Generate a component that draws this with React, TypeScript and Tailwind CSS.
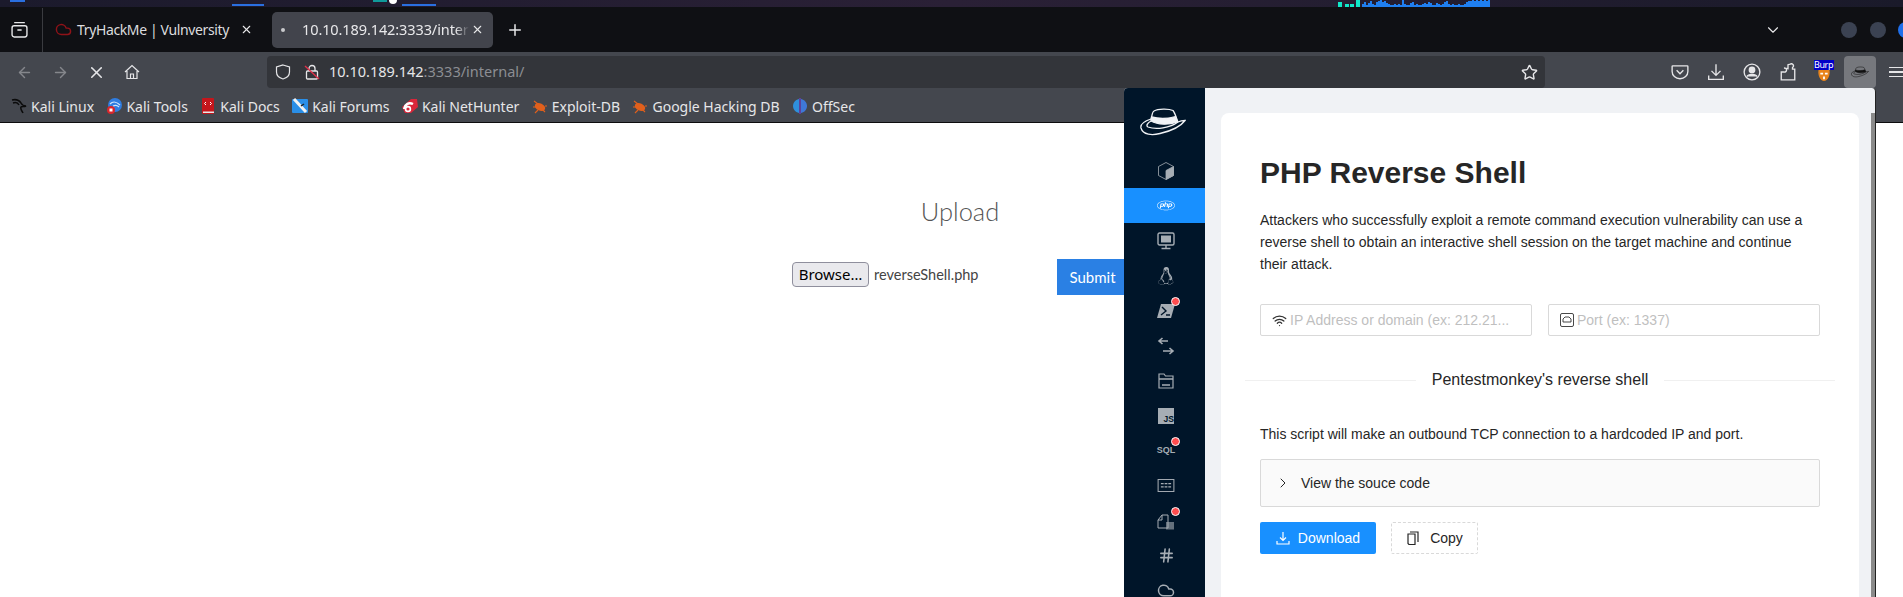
import { ArrowLeft, ArrowRight, X, Plus, ChevronDown, ChevronRight, Star, Wifi, Hash, Cloud } from 'lucide-react';
import { FaLinux, FaPhp } from 'react-icons/fa';

// network graph in the wallpaper strip, one value per 2px column
const graph = [3, 5, 2, 4, 6, 3, 2, 5, 6, 7, 5, 6, 4, 3, 2, 2, 3, 2, 3, 2, 7, 3, 2, 2, 4, 5, 2, 3, 2, 2, 3, 4, 3, 5, 4, 2, 2, 4, 3, 2, 3, 5, 6, 3, 2, 3, 2, 2, 3, 2, 2, 3, 5, 6, 6, 7, 6, 7, 6, 7, 6, 7, 6, 7];

function KaliIcon() {
  return (
    <svg viewBox="0 0 16 16" className="h-4 w-4" fill="none" stroke="#0b0b0b" strokeWidth="1.5">
      <path d="M1 2c4-1 7 0 9 3 1 2 3 3 5 3-2 1-4 0-5 1-1 2 1 4 2 6M2 5c3-1 5 0 6 2" />
    </svg>
  );
}

function ToolsIcon() {
  return (
    <svg viewBox="0 0 16 16" className="h-4 w-4">
      <circle cx="9" cy="7" r="7" fill="#2f7de1" />
      <path d="M4 6c3-3 7-2 10 1M7 8c2-1 4-1 6 1" stroke="#cfe4fb" strokeWidth="1.2" fill="none" />
      <circle cx="5" cy="12" r="4" fill="#d8262c" />
      <rect x="3.5" y="10.5" width="3" height="3" fill="#fff" />
    </svg>
  );
}

function DocsIcon() {
  return (
    <svg viewBox="0 0 16 16" className="h-4 w-4">
      <rect x="2" y="0" width="12" height="16" rx="1" fill="#c4161c" />
      <rect x="3" y="13.5" width="11" height="1.5" fill="#e8e8e8" />
      <path d="M6 4 4.5 5.5 6 7M10 4l1.5 1.5L10 7" stroke="#fff" strokeWidth="1" fill="none" />
    </svg>
  );
}

function ForumsIcon() {
  return (
    <svg viewBox="0 0 16 16" className="h-4 w-4">
      <rect x="0" y="1" width="16" height="14" rx="1" fill="#2a8fe8" />
      <path d="M2 1 14 14" stroke="#f2f2f2" strokeWidth="3" />
      <path d="M9 8l3-2" stroke="#222" strokeWidth="1.5" />
    </svg>
  );
}

function NetHunterIcon() {
  return (
    <svg viewBox="0 0 16 16" className="h-4 w-4">
      <path d="M0 9 9 1h6l1 8-7 6H3Z" fill="#d9263a" />
      <path d="M2 11c1-5 5-7 9-5" stroke="#fff" strokeWidth="2.4" fill="none" />
      <circle cx="6" cy="11" r="2.4" fill="none" stroke="#fff" strokeWidth="1.6" />
    </svg>
  );
}

function BugIcon() {
  return (
    <svg viewBox="0 0 16 16" className="h-4 w-4">
      <ellipse cx="8" cy="9" rx="5.5" ry="3.6" fill="#e2601c" transform="rotate(25 8 9)" />
      <path d="M2 3l4 3M1 9h3M3 15l3-3M13 14l-2-2M15 8h-2" stroke="#e2601c" strokeWidth="1.1" />
    </svg>
  );
}

function OffSecIcon() {
  return (
    <svg viewBox="0 0 16 16" className="h-4 w-4">
      <path d="M7 1C3 2 1 5 1 8s2 6 6 7Z" fill="#2f8fdc" />
      <path d="M9 1c4 1 6 4 6 7s-2 6-6 7Z" fill="#3f78d8" />
      <rect x="7.4" y="0" width="1.2" height="16" fill="#6a3fd0" />
    </svg>
  );
}

const bookmarks = [
  { label: 'Kali Linux', icon: <KaliIcon /> },
  { label: 'Kali Tools', icon: <ToolsIcon /> },
  { label: 'Kali Docs', icon: <DocsIcon /> },
  { label: 'Kali Forums', icon: <ForumsIcon /> },
  { label: 'Kali NetHunter', icon: <NetHunterIcon /> },
  { label: 'Exploit-DB', icon: <BugIcon /> },
  { label: 'Google Hacking DB', icon: <BugIcon /> },
  { label: 'OffSec', icon: <OffSecIcon /> },
];

function Hat({ className }: { className?: string }) {
  return (
    <svg viewBox="0 0 46 28" className={className} fill="none" stroke="currentColor" strokeWidth="1.3">
      <path d="M11 12 C12 8 12 4 14 3 C18 0.5 29 0.5 33 2.5 C35 5 36 9 38 14" />
      <path d="M11.5 9 C19 11 29 10.5 35.5 8.5 L37.5 14 C29 17 18 17 11 13 Z" fill="currentColor" />
      <path d="M11 11 C5 13 0 16 1 20 C3 27 12 27.5 20 25.5 C31 23 41 18 45 12.5 C42 12.5 40 13 38 14 C30 20 16 22 8 19 C6 18 7 15 11 13" />
    </svg>
  );
}

function NavSlot({ children }: { children: React.ReactNode }) {
  return <div className="flex h-8 w-9 shrink-0 items-center justify-center">{children}</div>;
}

function SideItem({ children, active, badge }: { children: React.ReactNode; active?: boolean; badge?: boolean }) {
  return (
    <div className={`flex h-[35px] shrink-0 items-center justify-center pl-[3px] ${active ? 'bg-[#1890ff] text-white' : 'text-[#a6adb4]'}`}>
      <div className="relative flex h-[18px] w-[18px] items-center justify-center">
        {children}
        {badge && <span className="absolute -right-[5px] -top-[5px] box-content h-[7px] w-[7px] rounded-full border border-white bg-[#ff4d4f]" />}
      </div>
    </div>
  );
}

export default function App() {
  return (
    <div className="relative flex h-[597px] w-[1903px] flex-col overflow-hidden bg-white font-['Noto_Sans',sans-serif]">
      {/* wallpaper strip */}
      <div className="relative h-[7px] shrink-0 bg-gradient-to-r from-[#1b1a2c] via-[#2a2036] to-[#1a1a2a]">
        <div className="absolute left-[10px] top-0 h-[2px] w-[15px] bg-[#2a6fe0]" />
        <div className="absolute left-[232px] top-[4px] h-[2px] w-[32px] bg-[#2a6fe0]" />
        <div className="absolute left-[373px] top-0 h-[2px] w-[14px] bg-[#109a9a]" />
        <div className="absolute left-[389px] top-0 h-[4px] w-[8px] rounded-b-full bg-white" />
        <div className="absolute left-[402px] top-[4px] h-[2px] w-[34px] bg-[#2a6fe0]" />
        <svg viewBox="0 0 160 7" className="absolute left-[1330px] top-0 h-[7px] w-[160px]">
          <path d="M8 2h4v5H8ZM15 4h4v3h-4ZM20 4h4v3h-4ZM26 0h4v7h-4Z" fill="#10e8c8" />
          {graph.map((h, i) => (
            <rect key={i} x={32 + i * 2} y={7 - h} width="2" height={h} fill="#1f7ff0" />
          ))}
        </svg>
      </div>

      {/* tab bar */}
      <div className="flex h-[45px] shrink-0 items-center bg-[#0f1014] text-[#e8e8ea]">
        <div className="flex h-[44px] w-[43px] shrink-0 items-center justify-center border-r border-[#3a3b40] pr-[3px]">
          <svg viewBox="0 0 16 16" className="h-[17px] w-[17px]" fill="none" stroke="currentColor" strokeWidth="1.3">
            <rect x="1" y="4.5" width="14" height="10.5" rx="2" />
            <path d="M3 1.5h10M6 8.5h4" />
          </svg>
        </div>
        <div className="flex h-[36px] w-[229px] shrink-0 items-center pl-[12px]">
          <Cloud size={17} className="text-[#8f1218]" />
          <span className="ml-[5px] w-[168px] text-[14px] tracking-[-0.37px] whitespace-nowrap text-[#dcdcdf]">TryHackMe | Vulnversity</span>
          <X size={13} className="ml-[-5px]" />
        </div>
        <div className="flex h-[36px] w-[221px] shrink-0 items-center rounded-[5px] bg-[#42444c] pl-[9px]">
          <span className="h-[4px] w-[4px] rounded-full bg-[#c9cacd]" />
          <span className="ml-[17px] w-[167px] text-[14.5px] tracking-[-0.1px] whitespace-nowrap [mask-image:linear-gradient(to_right,black_92%,transparent)]">10.10.189.142:3333/intern</span>
          <X size={13} className="ml-[2px]" />
        </div>
        <Plus size={18} className="ml-[13px] shrink-0" />
        <ChevronDown size={18} strokeWidth={1.5} className="ml-[1240px] shrink-0" />
        <span className="ml-[59px] h-[16px] w-[16px] shrink-0 rounded-full bg-[#3b4252]" />
        <span className="ml-[13px] h-[16px] w-[16px] shrink-0 rounded-full bg-[#3b4252]" />
        <span className="ml-[12px] h-[16px] w-[16px] shrink-0 rounded-full bg-[#1f6feb]" />
      </div>

      {/* toolbar */}
      <div className="flex h-[36px] shrink-0 items-end bg-[#44474e] text-[#e6e6e8]">
        <div className="flex pl-[6px]">
          <NavSlot><ArrowLeft size={17} className="text-[#85878c]" /></NavSlot>
          <NavSlot><ArrowRight size={17} className="text-[#85878c]" /></NavSlot>
          <NavSlot><X size={19} /></NavSlot>
          <NavSlot>
            <svg viewBox="0 0 16 16" className="h-4 w-4" fill="none" stroke="currentColor" strokeWidth="1.2">
              <path d="M1 8 8 1.5 15 8M3 7v7.5h10V7M6.5 14.5V10h3v4.5" />
            </svg>
          </NavSlot>
        </div>
        <div className="ml-[117px] flex h-8 w-[1278px] shrink-0 items-center rounded-[4px] bg-[#33353a] pl-[8px]">
          <svg viewBox="0 0 16 16" className="h-4 w-4" fill="none" stroke="currentColor" strokeWidth="1.2">
            <path d="M8 1 14.5 3v5c0 3.5-3 6-6.5 7C4.5 14 1.5 11.5 1.5 8V3Z" />
          </svg>
          <svg viewBox="0 0 16 16" className="ml-[13px] h-4 w-4" fill="none">
            <rect x="2.5" y="7" width="11" height="8" rx="1" stroke="#e6e6e8" strokeWidth="1.3" />
            <path d="M5 7V4.5a3 3 0 0 1 6 0V7" stroke="#e6e6e8" strokeWidth="1.3" />
            <path d="M1 2 15 15" stroke="#e0304a" strokeWidth="1.4" />
          </svg>
          <span className="ml-[9px] text-[14.5px] whitespace-nowrap">
            10.10.189.142<span className="text-[#8c8e93]">:3333/internal/</span>
          </span>
          <Star size={17} className="ml-auto mr-[7px]" />
        </div>
        <div className="ml-[117px] flex">
          <NavSlot>
            <svg viewBox="0 0 16 16" className="h-[18px] w-[18px]" fill="none" stroke="currentColor" strokeWidth="1.2">
              <path d="M1.5 2.5h13a.5.5 0 0 1 .5.5v4.5c0 3.5-3 6.5-7 6.5s-7-3-7-6.5V3a.5.5 0 0 1 .5-.5Z" />
              <path d="M5 6.5 8 9.5l3-3" />
            </svg>
          </NavSlot>
          <NavSlot>
            <svg viewBox="0 0 16 16" className="h-[18px] w-[18px]" fill="none" stroke="currentColor" strokeWidth="1.2">
              <path d="M8 1v9.5M4 7l4 4 4-4M1.5 11v3.5h13V11" />
            </svg>
          </NavSlot>
          <NavSlot>
            <svg viewBox="0 0 16 16" className="h-[18px] w-[18px]" fill="none" stroke="currentColor" strokeWidth="1.2">
              <circle cx="8" cy="8" r="7" />
              <circle cx="8" cy="6.2" r="2.4" fill="currentColor" />
              <path d="M3.5 12c1-2.5 8-2.5 9 0" fill="currentColor" />
            </svg>
          </NavSlot>
          <NavSlot>
            <svg viewBox="0 0 16 16" className="h-[18px] w-[18px]" fill="none" stroke="currentColor" strokeWidth="1.2">
              <path d="M2 15V8h2.5a1.8 1.8 0 1 0 0-3.5L8 5V1.5L10 1a1.8 1.8 0 0 1 2 3v1.5h2V15Z" />
            </svg>
          </NavSlot>
          <div className="relative flex h-8 w-9 shrink-0 flex-col items-center pt-[4px]">
            <span className="h-[10px] w-[20px] bg-[#0000c8] text-[9px] leading-[10px] tracking-[-0.4px] whitespace-nowrap text-white">Burp</span>
            <svg viewBox="0 0 14 12" className="h-[11px] w-[14px]">
              <path d="M1 0h12c1 6-2 12-6 12S0 6 1 0Z" fill="#e8841c" />
              <path d="M3 3h3v2H3ZM8 3h3v2H8ZM6 7h2v3H6Z" fill="#fff" />
            </svg>
          </div>
          <div className="flex h-8 w-9 shrink-0 items-center justify-center">
            <div className="flex h-8 w-8 items-center justify-center rounded-[4px] bg-[#76787d] text-[#111]">
              <Hat className="h-[12px] w-[18px]" />
            </div>
          </div>
          <div className="flex h-8 w-9 shrink-0 flex-col items-center justify-center gap-[3px]">
            <span className="h-[1.5px] w-[14px] bg-[#e6e6e8]" />
            <span className="h-[1.5px] w-[14px] bg-[#e6e6e8]" />
            <span className="h-[1.5px] w-[14px] bg-[#e6e6e8]" />
          </div>
        </div>
      </div>

      {/* bookmarks */}
      <div className="flex h-[35px] shrink-0 items-center gap-[12.4px] border-b border-[#0c0c0d] bg-[#44474e] pt-[2px] pl-[11px] text-[14px] text-[#e6e6e8]">
        {bookmarks.map((b) => (
          <div key={b.label} className="flex items-center gap-[4px] whitespace-nowrap">
            {b.icon}
            {b.label}
          </div>
        ))}
      </div>

      {/* page */}
      <div className="flex flex-1 flex-col items-center pl-[17px] font-['Lato',sans-serif]">
        <div className="w-[336px]">
          <h1 className="mt-[70px] text-center text-[25.5px] leading-[36px] font-light text-[#555]">Upload</h1>
          <div className="mt-[30px] flex items-start">
            <div className="flex h-[31px] items-center">
              <button className="h-[25px] w-[77px] rounded-[4px] border border-[#8f8f9d] bg-[#e9e9ed] font-['Noto_Sans',sans-serif] text-[15px] leading-none text-black">Browse…</button>
              <span className="ml-[5px] text-[14.5px] text-[#444]">reverseShell.php</span>
            </div>
            <button className="ml-auto h-[36px] w-[71px] bg-[#2a80e4] text-[15px] text-white">Submit</button>
          </div>
        </div>
      </div>

      {/* extension popup */}
      <div className="absolute left-[1124px] top-[88px] flex h-[509px] w-[752px] overflow-hidden rounded-t-[4px] border-r border-[#222] bg-[#f0f2f5] font-['Liberation_Sans',sans-serif]">
        <div className="flex w-[81px] shrink-0 flex-col overflow-hidden bg-[#001529]">
          <div className="flex h-[65px] shrink-0 items-center justify-center pt-[3px] pr-[4px] text-[#f0f2f5]">
            <Hat className="h-[28px] w-[46px]" />
          </div>
          <SideItem>
            <svg viewBox="0 0 18 18" className="h-[18px] w-[18px]" fill="none" stroke="currentColor" strokeWidth="0.8">
              <path d="M9 0.5 16.5 4.5v9L9 17.5 1.5 13.5v-9Z" />
              <path d="M9 8.5 16.5 4.5v9L9 17.5Z" fill="currentColor" />
            </svg>
          </SideItem>
          <SideItem active><FaPhp size={19} /></SideItem>
          <SideItem>
            <svg viewBox="0 0 18 18" className="h-[18px] w-[18px]" fill="none" stroke="currentColor" strokeWidth="1.4">
              <rect x="1" y="1" width="16" height="12" rx="1.5" />
              <rect x="4" y="3.5" width="10" height="7" fill="currentColor" stroke="none" />
              <path d="M9 13v3M4.5 16.5h9" />
            </svg>
          </SideItem>
          <SideItem><FaLinux size={18} /></SideItem>
          <SideItem badge>
            <svg viewBox="0 0 18 16" className="h-4 w-[18px]">
              <path d="M4 1h14l-4 14H0Z" fill="currentColor" />
              <path d="M5 4l4 4-5 4M9 12h4" fill="none" stroke="#001529" strokeWidth="1.4" />
            </svg>
          </SideItem>
          <SideItem>
            <svg viewBox="0 0 18 18" className="h-[18px] w-[18px]" fill="none" stroke="currentColor" strokeWidth="1.6">
              <path d="M11 4H2M5.5 1 2 4l3.5 3M6 14h10M12.5 11l3.5 3-3.5 3" />
            </svg>
          </SideItem>
          <SideItem>
            <svg viewBox="0 0 18 18" className="h-[18px] w-[18px]" fill="none" stroke="currentColor" strokeWidth="1.2">
              <path d="M2 2h5l1.5 2H16v12H2Z" />
              <path d="M2 7h14M5 13h8" strokeWidth="1.6" />
            </svg>
          </SideItem>
          <SideItem>
            <div className="flex h-4 w-4 items-end justify-end bg-current">
              <span className="text-[8.5px] leading-[9px] font-bold text-[#001529]">JS</span>
            </div>
          </SideItem>
          <SideItem badge><span className="text-[9px] font-bold">SQL</span></SideItem>
          <SideItem>
            <svg viewBox="0 0 18 14" className="h-[13px] w-[18px]" fill="none" stroke="currentColor" strokeWidth="1.1">
              <rect x="0.5" y="0.5" width="17" height="13" />
              <path d="M3.5 5h3M7.5 5h3M11.5 5h3M3.5 8.5h3M7.5 8.5h3M11.5 8.5h3" strokeWidth="1.4" />
            </svg>
          </SideItem>
          <SideItem badge>
            <svg viewBox="0 0 18 18" className="h-[18px] w-[18px]" fill="none" stroke="currentColor" strokeWidth="1">
              <path d="M1 8 5 3h6v13H1ZM1 8h4V3" />
              <rect x="9" y="10" width="8" height="7.5" fill="currentColor" stroke="none" opacity="0.6" />
            </svg>
          </SideItem>
          <SideItem><Hash size={17} strokeWidth={2.2} /></SideItem>
          <SideItem><Cloud size={19} /></SideItem>
        </div>
        <div className="flex min-w-0 flex-1 pt-[25px] pl-[16px]">
          <div className="w-[638px] shrink-0 rounded-t-[8px] bg-white px-[39px] text-[14px] leading-[22px] text-[#262626]">
            <h2 className="mt-[41px] text-[30px] leading-[38px] font-bold">PHP Reverse Shell</h2>
            <p className="mt-[17px]">
              Attackers who successfully exploit a remote command execution vulnerability can use a
              reverse shell to obtain an interactive shell session on the target machine and continue
              their attack.
            </p>
            <div className="mt-[29px] flex gap-[16px]">
              <div className="flex h-8 w-[272px] items-center gap-[3px] rounded-[2px] border border-[#d9d9d9] px-[11px] text-[#bfbfbf]">
                <Wifi size={15} className="shrink-0 text-[#333]" />
                <span className="whitespace-nowrap">IP Address or domain (ex: 212.21...</span>
              </div>
              <div className="flex h-8 w-[272px] items-center gap-[3px] rounded-[2px] border border-[#d9d9d9] px-[11px] text-[#bfbfbf]">
                <svg viewBox="0 0 14 14" className="h-[14px] w-[14px] shrink-0" fill="none" stroke="#333" strokeWidth="0.9">
                  <rect x="0.5" y="0.5" width="13" height="13" rx="1.5" />
                  <path d="M3 9V6l2-2h4l2 2v3Z" />
                </svg>
                <span>Port (ex: 1337)</span>
              </div>
            </div>
            <div className="-mx-[15px] mt-[32px] flex items-center gap-[16px] text-[16px] leading-[24px]">
              <span className="h-px flex-1 bg-[#f0f0f0]" />
              <span>Pentestmonkey's reverse shell</span>
              <span className="h-px flex-1 bg-[#f0f0f0]" />
            </div>
            <p className="mt-[31px]">This script will make an outbound TCP connection to a hardcoded IP and port.</p>
            <div className="mt-[14px] flex h-[48px] items-center rounded-[2px] border border-[#d9d9d9] bg-[#fafafa] pl-[14px]">
              <ChevronRight size={16} strokeWidth={1.5} />
              <span className="ml-[10px]">View the souce code</span>
            </div>
            <div className="mt-[15px] flex gap-[15px]">
              <button className="flex h-8 w-[116px] items-center justify-center gap-[8px] rounded-[2px] bg-[#1890ff] text-white">
                <svg viewBox="0 0 14 14" className="h-[14px] w-[14px]" fill="none" stroke="currentColor" strokeWidth="1.2">
                  <path d="M7 1v8M4 6.5 7 9.5l3-3M1 10v3h12v-3" />
                </svg>
                Download
              </button>
              <button className="flex h-8 w-[87px] items-center justify-center gap-[10px] rounded-[2px] border border-dashed border-[#d9d9d9] bg-white">
                <svg viewBox="0 0 14 14" className="h-[14px] w-[14px]" fill="none" stroke="currentColor" strokeWidth="1.2">
                  <path d="M4 1h8v10M2 3h7v10.5H3L2 12.5Z" />
                </svg>
                Copy
              </button>
            </div>
          </div>
          <div className="ml-[12px] w-[4px] shrink-0 bg-[#8a8a8a]" />
        </div>
      </div>
    </div>
  );
}
